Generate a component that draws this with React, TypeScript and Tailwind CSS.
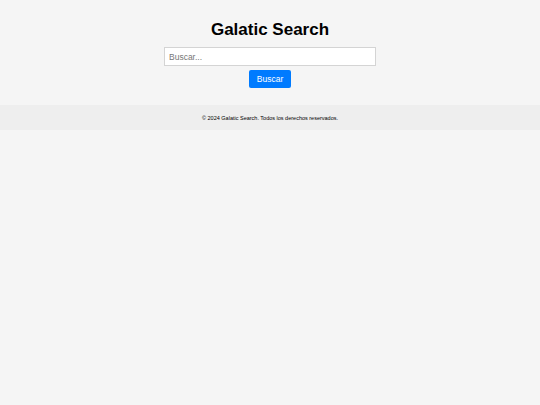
export default function App() {
  return (
    <div className="min-h-[405px] bg-[#f5f5f5] font-['Liberation_Sans',Arial,sans-serif] text-black">
      <header className="flex flex-col items-center pt-[20px] pb-[17px]">
        <h1 className="text-[17px] font-bold leading-[20px]">Galatic Search</h1>
        <input
          type="text"
          placeholder="Buscar..."
          className="mt-[7px] h-[19px] w-[212px] border border-[#d4d4d4] bg-white px-[4px] text-[8.5px] text-black placeholder:text-[#777] outline-none"
        />
        <button className="mt-[4px] h-[18px] w-[42px] rounded-[2px] bg-[#007bff] text-[8.5px] text-white">
          Buscar
        </button>
      </header>
      <footer className="flex h-[25px] items-center justify-center bg-[#eeeeee] pt-[1px] text-[5.5px]">
        © 2024 Galatic Search. Todos los derechos reservados.
      </footer>
    </div>
  )
}
